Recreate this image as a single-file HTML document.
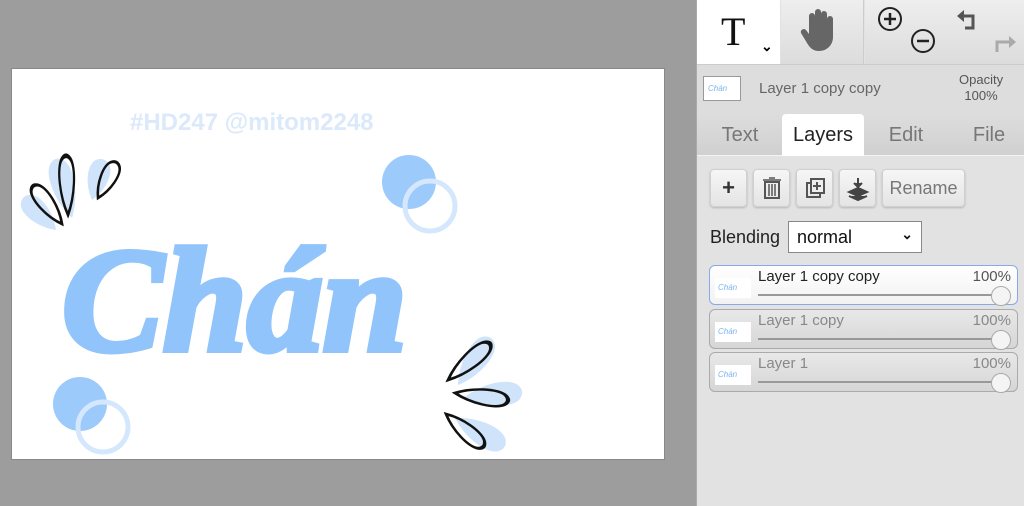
<!DOCTYPE html>
<html><head><meta charset="utf-8"><style>
*{margin:0;padding:0;box-sizing:border-box}
body{width:1024px;height:506px;background:#9d9d9d;position:relative;overflow:hidden;font-family:"Liberation Sans",sans-serif}
#canvas{position:absolute;left:11px;top:68px;width:654px;height:392px;background:#fff;border:1px solid #888}
#panel{position:absolute;left:696px;top:0;width:328px;height:506px;background:#e2e2e2;border-left:1px solid #aaa}
.tb{position:absolute;top:0;height:64px;background:linear-gradient(#eee,#dcdcdc)}
.btn{position:absolute;height:38px;top:169px;background:linear-gradient(#f6f6f6,#e4e4e4);border:1px solid #d0d0d0;border-radius:4px;box-shadow:0 1px 2px rgba(0,0,0,.2)}
.tab{position:absolute;top:114px;height:42px;font-size:20px;color:#777;text-align:center;line-height:42px}
.layer{position:absolute;left:12px;width:309px;height:40px;border:1px solid #aaa;border-radius:6px;background:linear-gradient(#e8e8e8,#d6d6d6)}
.layer .th{position:absolute;left:5px;top:12px;width:36px;height:20px;background:#fff;color:#7ab4f0;font-size:8px;font-style:italic;padding:5px 3px}
.layer .nm{position:absolute;left:48px;top:2px;font-size:15px;color:#888}
.layer .pc{position:absolute;right:6px;top:2px;font-size:15px;color:#888}
.layer .sl{position:absolute;left:48px;right:16px;top:28px;height:2px;background:#999}
.layer .kn{position:absolute;right:6px;top:20px;width:20px;height:20px;border-radius:50%;background:#f4f4f4;border:1px solid #aaa}
</style></head><body>
<div id="canvas">
<svg width="654" height="392" viewBox="11 68 654 392" style="position:absolute;left:-1px;top:-1px">
<defs><path id="d" d="M0 0 C-10 -12 -13 -30 -6 -36 C-2 -39 2 -39 6 -36 C13 -30 10 -12 0 0Z"/></defs>
<text x="130" y="130" font-family="Liberation Sans,sans-serif" font-weight="bold" font-size="24" fill="#dbe9fb">#HD247 @mitom2248</text>
<circle cx="409" cy="182" r="27" fill="#9ccbfb"/>
<circle cx="430" cy="206" r="25" fill="none" stroke="#d5e7fc" stroke-width="5"/>
<circle cx="80" cy="404" r="27" fill="#9ccbfb"/>
<circle cx="103" cy="427" r="25" fill="none" stroke="#d5e7fc" stroke-width="5"/>
<g fill="#cfe3fa">
<use href="#d" transform="translate(56 230) rotate(-45) scale(1.1 1.2)"/>
<use href="#d" transform="translate(72 218) rotate(-15) scale(1.2 1.6)"/>
<use href="#d" transform="translate(92 200) rotate(15) scale(1.1 1.1)"/>
<use href="#d" transform="translate(458 385) rotate(35) scale(1.2 1.5)"/>
<use href="#d" transform="translate(465 397) rotate(85) scale(1.2 1.5)"/>
<use href="#d" transform="translate(455 418) rotate(120) scale(1.2 1.5)"/>
</g>
<g fill="none" stroke="#111" stroke-width="3">
<use href="#d" transform="translate(62 224) rotate(-37) scale(0.8 1.25)"/>
<use href="#d" transform="translate(68 215) rotate(-2) scale(0.75 1.55)"/>
<use href="#d" transform="translate(98 198) rotate(27) scale(0.8 1.05)"/>
<use href="#d" transform="translate(448 380) rotate(49) scale(0.8 1.45)"/>
<use href="#d" transform="translate(455 393) rotate(98) scale(0.8 1.4)"/>
<use href="#d" transform="translate(446 414) rotate(131) scale(0.8 1.3)"/>
</g>
<text x="62" y="350" font-family="Liberation Serif,serif" font-style="italic" font-weight="bold" font-size="148" fill="#90c4fa" stroke="#90c4fa" stroke-width="6" textLength="345" lengthAdjust="spacingAndGlyphs">Chán</text>
</svg>
</div>
<div id="panel">
<div class="tb" style="left:0;width:83px;background:#fff"><span style="position:absolute;left:24px;top:8px;font-family:'Liberation Serif',serif;font-size:40px;color:#111">T</span><span style="position:absolute;left:64px;top:38px;font-size:14px;font-weight:bold">⌄</span></div>
<div class="tb" style="left:84px;width:83px;border-right:1px solid #ccc"><svg width="83" height="64"><path d="M28 28 v-12 a3 3 0 0 1 6 0 v10 v-14 a3 3 0 0 1 6 0 v14 v-12 a3 3 0 0 1 6 0 v13 v-8 a3 3 0 0 1 6 0 v18 c0 8-6 14-14 14 c-6 0-9-3-12-8 l-6-10 a3 3 0 0 1 5-3 l3 4z" fill="#666"/></svg></div>
<div class="tb" style="left:168px;width:160px"><svg width="160" height="64"><circle cx="25" cy="19" r="11" fill="none" stroke="#222" stroke-width="2"/><path d="M19 19h12M25 13v12" stroke="#222" stroke-width="2.5"/><circle cx="58" cy="41" r="11" fill="none" stroke="#222" stroke-width="2"/><path d="M52 41h12" stroke="#222" stroke-width="2.5"/><path d="M98 16h10v12h-8" fill="none" stroke="#555" stroke-width="3"/><path d="M92 16l7-6v12z" fill="#555"/><path d="M132 52v-10h12" fill="none" stroke="#aaa" stroke-width="3"/><path d="M144 36l7 6-7 6z" fill="#aaa"/></svg></div>
<div style="position:absolute;left:0;top:64px;width:328px;height:50px;background:#ddd;border-top:1px solid #ccc"></div>
<div style="position:absolute;left:6px;top:76px;width:38px;height:25px;background:#fff;border:1px solid #999;color:#7ab4f0;font-size:8px;font-style:italic;padding:7px 4px">Chán</div>
<div style="position:absolute;left:62px;top:80px;font-size:15px;color:#666">Layer 1 copy copy</div>
<div style="position:absolute;left:262px;top:72px;font-size:13px;color:#555;text-align:center;line-height:16px">Opacity<br>100%</div>
<div style="position:absolute;left:0;top:114px;width:328px;height:42px;background:linear-gradient(#ddd,#d0d0d0);border-bottom:1px solid #f4f4f4"></div>
<div class="tab" style="left:6px;width:74px">Text</div>
<div class="tab" style="left:85px;width:82px;background:#fff;color:#222;border-radius:4px 4px 0 0">Layers</div>
<div class="tab" style="left:172px;width:74px">Edit</div>
<div class="tab" style="left:255px;width:74px">File</div>
<div class="btn" style="left:13px;width:37px;text-align:center;font-size:22px;font-weight:bold;line-height:36px;color:#333">+</div>
<div class="btn" style="left:56px;width:37px"><svg width="37" height="38"><rect x="11" y="12" width="14" height="16" fill="none" stroke="#555" stroke-width="2"/><path d="M9 10h18M15 8h6M15 14v12M18 14v12M21 14v12" stroke="#555" stroke-width="1.5"/></svg></div>
<div class="btn" style="left:99px;width:37px"><svg width="37" height="38"><rect x="10" y="13" width="13" height="14" fill="none" stroke="#555" stroke-width="2"/><rect x="14" y="9" width="13" height="14" fill="#eee" stroke="#555" stroke-width="2"/><path d="M20 12v8M16 16h8" stroke="#555" stroke-width="2"/></svg></div>
<div class="btn" style="left:142px;width:37px"><svg width="37" height="38"><path d="M18 8v8M14 13l4 4 4-4M9 22l9-4 9 4-9 4z M9 26l9 4 9-4" fill="#444" stroke="#444" stroke-width="2"/></svg></div>
<div class="btn" style="left:185px;width:83px;font-size:18px;color:#777;text-align:center;line-height:36px">Rename</div>
<div style="position:absolute;left:13px;top:227px;font-size:18px;color:#222">Blending</div>
<div style="position:absolute;left:91px;top:221px;width:134px;height:32px;background:#fff;border:1px solid #888;font-size:18px;padding:5px 8px;color:#111">normal<span style="position:absolute;right:8px;top:4px;font-size:14px;font-weight:bold">⌄</span></div>
<div class="layer" style="top:265px;background:linear-gradient(#fff,#f2f2f2);border-color:#8aa8e8"><div class="th">Chán</div><div class="nm" style="color:#222">Layer 1 copy copy</div><div class="pc" style="color:#555">100%</div><div class="sl"></div><div class="kn"></div></div>
<div class="layer" style="top:309px"><div class="th">Chán</div><div class="nm">Layer 1 copy</div><div class="pc">100%</div><div class="sl"></div><div class="kn"></div></div>
<div class="layer" style="top:352px"><div class="th">Chán</div><div class="nm">Layer 1</div><div class="pc">100%</div><div class="sl"></div><div class="kn"></div></div>
</div>
</body></html>
